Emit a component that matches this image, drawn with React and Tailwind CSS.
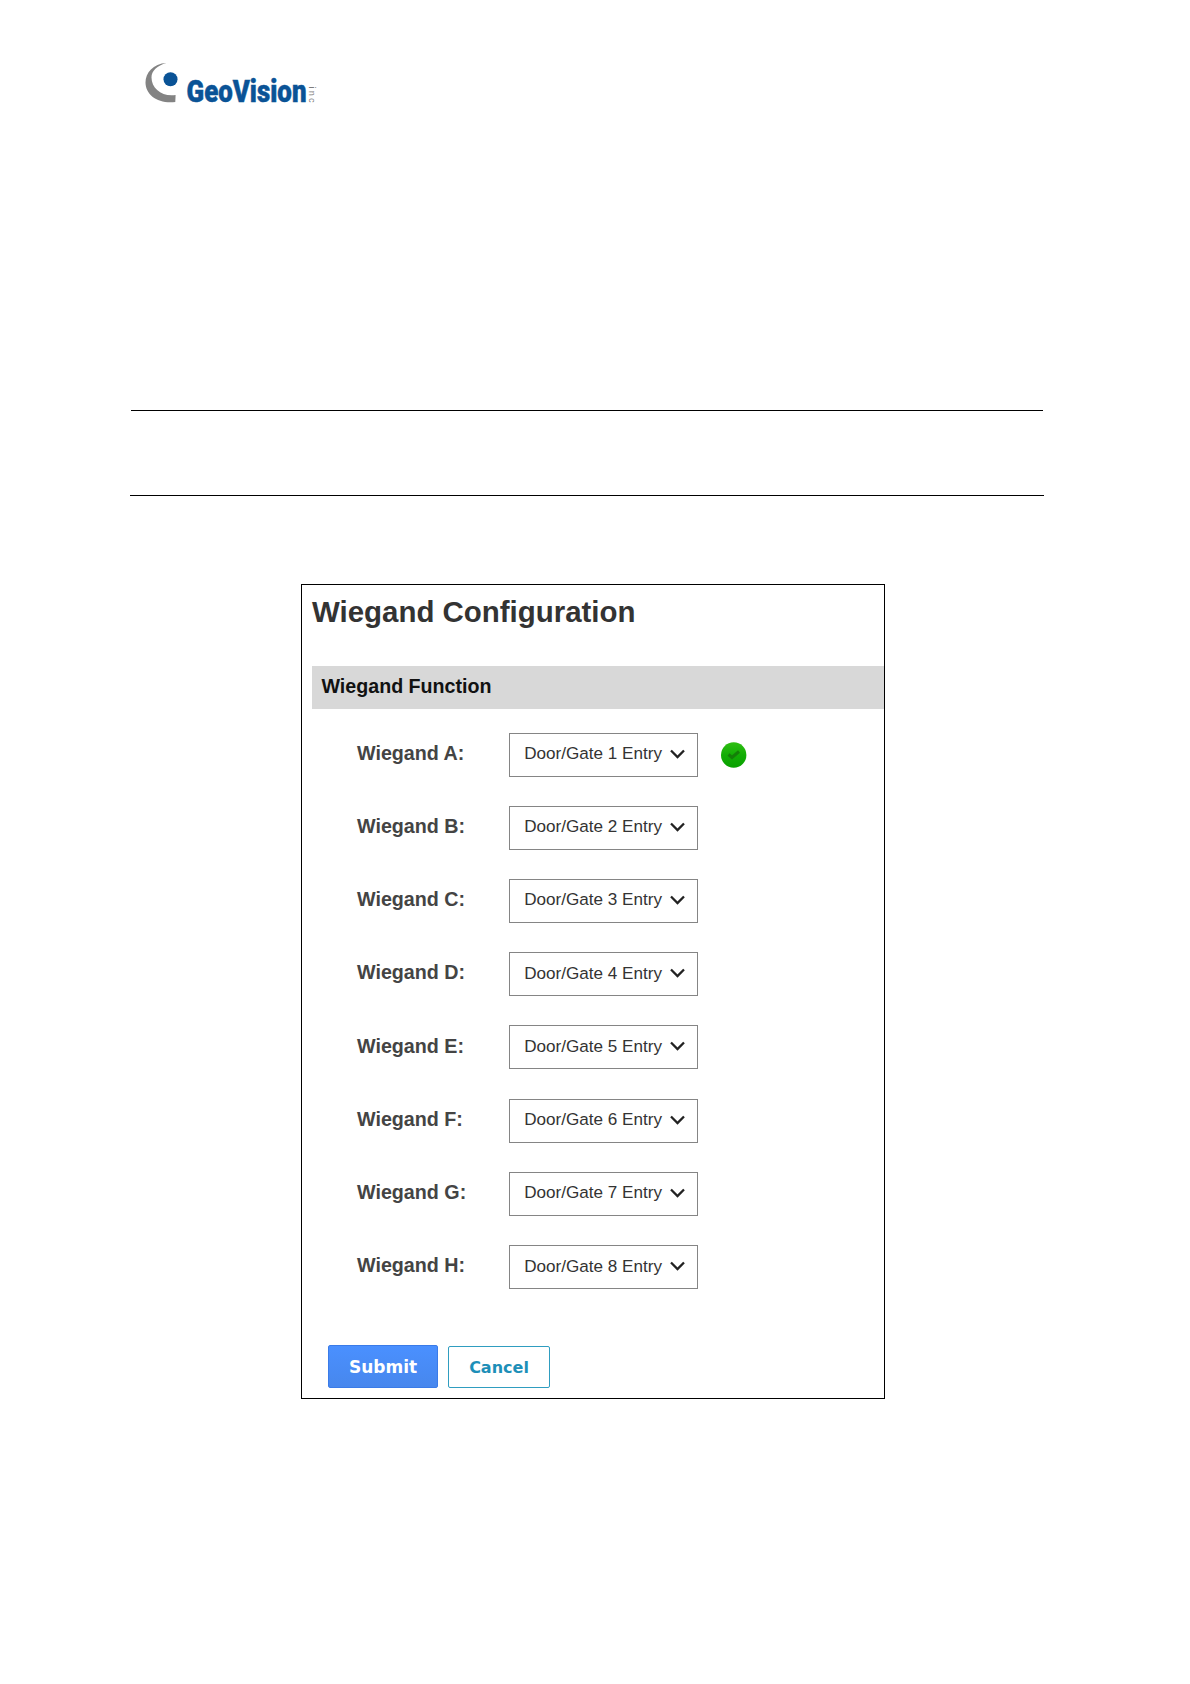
import React from "react";

const rows = [
  { id: "A", gate: 1, ok: true },
  { id: "B", gate: 2 },
  { id: "C", gate: 3 },
  { id: "D", gate: 4 },
  { id: "E", gate: 5 },
  { id: "F", gate: 6 },
  { id: "G", gate: 7 },
  { id: "H", gate: 8 },
];

function Logo() {
  return (
    <svg className="ml-[140px] block h-[60px] w-[180px] overflow-visible" viewBox="140 58 180 60">
      <path
        d="M166.500 63C153 63.500 145.500 73 145.500 82.500C145.500 95 158 104 175.300 102L175.600 95C162 97 151.500 88.500 151.500 77.500C151.500 71 157 65.500 166.500 63Z"
        fill="#838383"
      />
      <circle cx="170.500" cy="79.300" r="7" fill="#0a5396" />
      <text
        x="186.500"
        y="102.300"
        fontFamily="Roboto, sans-serif"
        fontWeight="900"
        fontSize="31"
        fill="#0a5396"
        stroke="#0a5396"
        strokeWidth="0.500"
        textLength="120"
        lengthAdjust="spacingAndGlyphs"
      >
        GeoVision
      </text>
      <text
        transform="translate(309 86.500) rotate(90)"
        fontFamily="Liberation Sans, sans-serif"
        fontSize="9"
        fill="#7d7d7d"
        textLength="16"
      >
        inc
      </text>
    </svg>
  );
}

function Chevron() {
  return (
    <svg className="mb-[2px] h-[10px] w-[15px]" viewBox="0 0 15 10" fill="none" stroke="#222" strokeWidth="2.300">
      <path d="M1 1.500L7.500 8L14 1.500" />
    </svg>
  );
}

function CheckBadge() {
  return (
    <svg className="ml-[23px] mt-px h-[26px] w-[26px]" viewBox="0 0 26 26">
      <defs>
        <linearGradient id="ok" x1="0" y1="0" x2="0" y2="1">
          <stop offset="0" stopColor="#2fbe12" />
          <stop offset="0.500" stopColor="#12ad05" />
          <stop offset="1" stopColor="#09a000" />
        </linearGradient>
      </defs>
      <circle cx="12.700" cy="13" r="12.700" fill="url(#ok)" />
      <path d="M7.500 12.500L11 15.500L18 9.500" fill="none" stroke="#147f08" strokeWidth="3" />
    </svg>
  );
}

export default function App() {
  return (
    <div className="flex h-[1684px] w-[1190px] flex-col overflow-hidden bg-white pt-[58px] font-['Liberation_Sans',Arial,sans-serif]">
      <Logo />
      <div className="ml-[131px] mt-[292px] h-px w-[912px] bg-black" />
      <div className="ml-[130px] mt-[84px] h-px w-[914px] bg-black" />
      <main className="ml-[301px] mt-[88px] flex h-[815px] w-[584px] flex-col border border-black">
        <h1 className="ml-[10px] h-[81px] whitespace-nowrap pt-[10px] text-[29.450px] font-bold leading-[34px] text-[#333]">
          Wiegand Configuration
        </h1>
        <h2 className="ml-[10px] h-[43px] bg-[#d8d8d8] pl-[9.500px] text-[19.650px] font-bold leading-[40px] text-[#111]">
          Wiegand Function
        </h2>
        <div className="mt-[8.900px] flex flex-col">
          {rows.map((r) => (
            <div key={r.id} className="flex h-[73.230px] items-center">
              <div className="ml-[55px] w-[152.200px] pb-[3.500px] text-[19.700px] font-bold leading-[22px] text-[#444]">
                Wiegand {r.id}:
              </div>
              <div className="flex h-[44px] w-[189px] items-center justify-between border border-[#858585] pl-[14px] pr-[12.500px]">
                <span className="whitespace-nowrap pb-px text-[17.100px] leading-[20px] text-[#333]">
                  Door/Gate {r.gate} Entry
                </span>
                <Chevron />
              </div>
              {r.ok && <CheckBadge />}
            </div>
          ))}
        </div>
        <div className="ml-[26px] mt-[41.100px] flex items-end gap-[10px] font-['DejaVu_Sans',sans-serif] font-bold">
          <button className="h-[43px] w-[110px] rounded-[2px] border border-[#3a7be8] bg-linear-to-b from-[#4a90ff] to-[#4787ed] pt-[2px] text-[17px] leading-[20px] text-white">
            Submit
          </button>
          <button className="h-[42px] w-[102px] rounded-[2px] border border-[#2f9dc0] bg-white pt-[2px] text-[16px] leading-[20px] text-[#1d8fb8]">
            Cancel
          </button>
        </div>
      </main>
    </div>
  );
}
